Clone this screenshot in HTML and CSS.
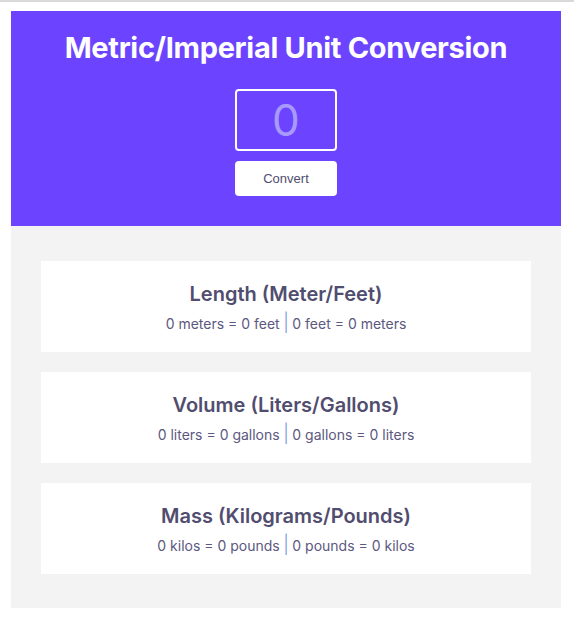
FILE: index.html
```html
<!DOCTYPE html>
<html lang="en">
<head>
    <meta charset="UTF-8">
    <meta name="viewport" content="width=device-width, initial-scale=1.0">
    <title>Metric/Imperial Unit Conversion</title>
    <link rel="stylesheet" href="styles.css">
</head>
<body>
    <div class="container">
        <header class="top">
            <h1>Metric/Imperial Unit Conversion</h1>
            <input type="number" id="amount" placeholder="0">
            <button id="convert">Convert</button>
        </header>

        <main class="results">
            <div class="card">
                <h2>Length (Meter/Feet)</h2>
                <p><span id="m-ft">0 meters = 0 feet</span><span class="sep">|</span><span id="ft-m">0 feet = 0 meters</span></p>
            </div>
            <div class="card">
                <h2>Volume (Liters/Gallons)</h2>
                <p><span id="l-gal">0 liters = 0 gallons</span><span class="sep">|</span><span id="gal-l">0 gallons = 0 liters</span></p>
            </div>
            <div class="card">
                <h2>Mass (Kilograms/Pounds)</h2>
                <p><span id="kg-lb">0 kilos = 0 pounds</span><span class="sep">|</span><span id="lb-kg">0 pounds = 0 kilos</span></p>
            </div>
        </main>
    </div>

    <script>
        function fmt(n) {
            return Number(n.toFixed(3));
        }

        document.getElementById("convert").addEventListener("click", function () {
            let v = Number(document.getElementById("amount").value) || 0;
            document.getElementById("m-ft").textContent = `${v} meters = ${fmt(v * 3.281)} feet`;
            document.getElementById("ft-m").textContent = `${v} feet = ${fmt(v / 3.281)} meters`;
            document.getElementById("l-gal").textContent = `${v} liters = ${fmt(v * 0.264)} gallons`;
            document.getElementById("gal-l").textContent = `${v} gallons = ${fmt(v / 0.264)} liters`;
            document.getElementById("kg-lb").textContent = `${v} kilos = ${fmt(v * 2.204)} pounds`;
            document.getElementById("lb-kg").textContent = `${v} pounds = ${fmt(v / 2.204)} kilos`;
        });
    </script>
</body>
</html>
```

FILE: styles.css
```css
html { border-top: 2px solid #d9d9d9; }
body { margin: 9px 13px 0 11px; font-family: Inter, "Noto Sans", sans-serif; }
.container { width: 550px; }
.top { background: #6c44ff; padding: 20px 0 30px; display: flex; flex-direction: column; align-items: center; }
.top h1 { margin: 0 0 24px; color: #fff; font-size: 29px; font-weight: 700; line-height: 34px; letter-spacing: -0.3px; }
.top input { box-sizing: border-box; width: 102px; height: 62px; background: transparent; border: 2px solid #fff; border-radius: 4px; color: #fff; font-family: Inter, sans-serif; font-size: 44px; text-align: center; outline: none; padding: 0; -moz-appearance: textfield; }
.top input::-webkit-outer-spin-button, .top input::-webkit-inner-spin-button { -webkit-appearance: none; margin: 0; }
.top input::placeholder { color: #a89afb; }
.top button { margin-top: 10px; width: 102px; height: 35px; background: #fff; border: none; border-radius: 4px; color: #514d6f; font-family: "Liberation Sans", Arial, sans-serif; font-size: 13px; cursor: pointer; }
.results { background: #f3f3f3; padding: 35px 30px 34px; display: flex; flex-direction: column; gap: 20px; }
.card { background: #fff; height: 91px; display: flex; flex-direction: column; align-items: center; justify-content: center; color: #514d6f; }
.card h2 { margin: 1px 0 8px; font-size: 20px; font-weight: 600; line-height: 24px; }
.card p { margin: 0; font-size: 14px; color: #5c5880; line-height: 18px; }
.sep { color: #7c8fd6; margin: 0 3.5px; font-size: 18px; font-weight: 300; }
```
